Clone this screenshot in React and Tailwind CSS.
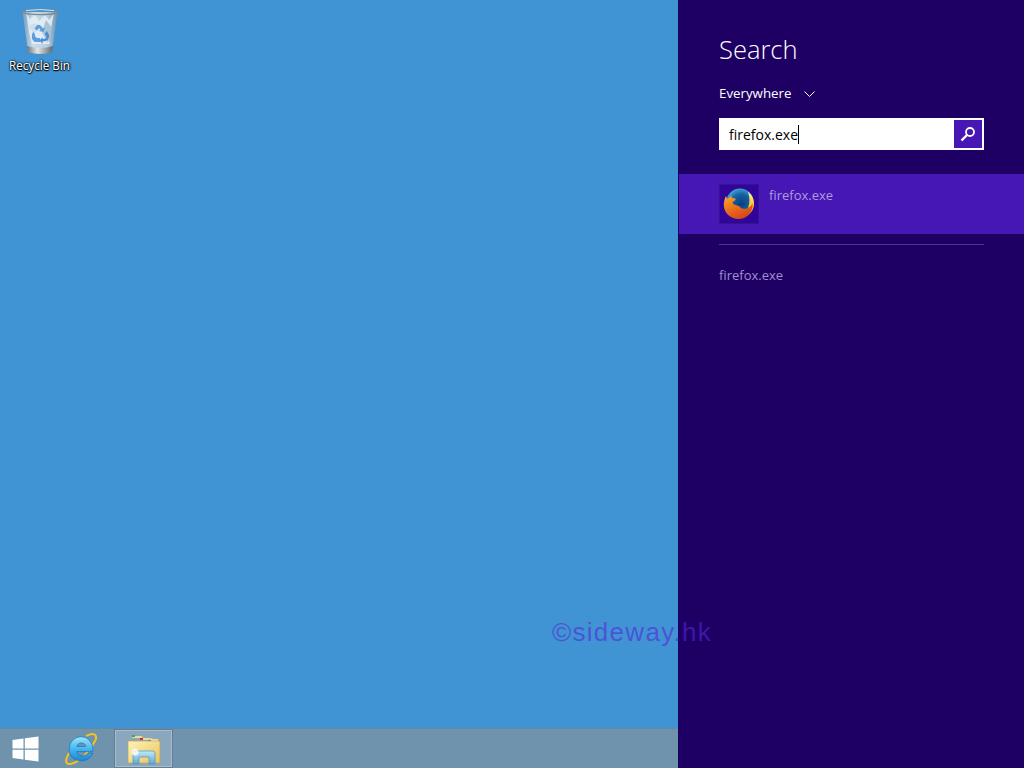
import React from 'react';

const uiFont = "font-['Open_Sans','Noto_Sans',sans-serif]";

function RecycleBinIcon() {
  return (
    <svg width="40" height="48" viewBox="0 0 40 48">
      <defs>
        <linearGradient id="binBody" x1="0" x2="1" y1="0" y2="0">
          <stop offset="0" stopColor="#6f9cbf" />
          <stop offset="0.3" stopColor="#c9dcea" />
          <stop offset="0.7" stopColor="#b7cfe0" />
          <stop offset="1" stopColor="#6590ae" />
        </linearGradient>
        <linearGradient id="binBase" x1="0" x2="1" y1="0" y2="0">
          <stop offset="0" stopColor="#6b7278" />
          <stop offset="0.4" stopColor="#e3e6e8" />
          <stop offset="1" stopColor="#5d6469" />
        </linearGradient>
      </defs>
      <path d="M2.5 4 L8 43 Q20 47 32 43 L37.5 4 Z" fill="url(#binBody)" />
      <path d="M6 4 L10 11 L15 7 L19 13 L25 7 L29 12 L34 5 L31 20 L28 29 L30 36 L12 36 L9 24 Z" fill="#e6eef4" opacity="0.85" />
      <path d="M26 12 L32 20 L28 35 L22 24 Z" fill="#a9c3d6" />
      <path d="M9 18 L15 15 L19 22 L13 25 Z" fill="#cfdeea" />
      <path d="M14 24 L15 27 Q14.5 29 17 30 L20 30 L20 34 L15 34 Q11 32 12 27 L12.5 25 Z" fill="#5b9edd" />
      <path d="M17 17 Q19 16 21 18 L23 20.5 L25 19.5 L23.5 24 L19 23 L20.5 22 L19 20 L17 22.5 L14.5 20.5 Z" fill="#5b9edd" />
      <path d="M27 23 L29 27 Q29.5 31 26 33 L22.5 33.5 L22.5 36 L19.5 32.5 L22.5 29 L22.5 31 L25.5 30.5 Q27 29.5 26 28 L24.5 26 Z" fill="#4a8fd3" />
      <path d="M6.8 38 L8 44 Q20 48 32 44 L33.2 38 Q20 42 6.8 38 Z" fill="url(#binBase)" />
      <ellipse cx="20" cy="4" rx="18" ry="2.6" fill="none" stroke="#7d8a94" strokeWidth="1.3" />
      <path d="M6 2.6 Q20 0.5 34 2.6" fill="none" stroke="#eef2f5" strokeWidth="0.8" />
    </svg>
  );
}

function WindowsLogo() {
  return (
    <svg width="27" height="26" viewBox="0 0 27 26">
      <path d="M0.5 4 L11.5 2.5 V12.4 H0.5 Z M12.8 2.3 L26.5 0.4 V12.4 H12.8 Z M0.5 13.7 H11.5 V23.6 L0.5 22 Z M12.8 13.7 H26.5 V25.6 L12.8 23.8 Z" fill="#fff" />
    </svg>
  );
}

function IeLogo() {
  return (
    <svg width="33" height="33" viewBox="0 0 32 32">
      <defs>
        <linearGradient id="ieFill" x1="0" x2="0" y1="0" y2="1">
          <stop offset="0" stopColor="#9ae6fb" />
          <stop offset="0.55" stopColor="#3fb2ee" />
          <stop offset="1" stopColor="#1a86d4" />
        </linearGradient>
      </defs>
      <path d="M4.5 21 C0 29 2 32.5 8 30.5 C17 27.5 26 17 30.5 8 C32.5 3 29 0 22 3.5" fill="none" stroke="#f2c01f" strokeWidth="2" strokeLinecap="round" />
      <path d="M5 16.5 A11.5 12 0 0 1 28 16.5 V19 H12.5 C13 24 21 24.5 23.5 20.5 H28 C24.5 31 5 31 5 16.5 Z M12.5 14 H21 C20.5 9.5 13 9.5 12.5 14 Z" fill="url(#ieFill)" fillRule="evenodd" stroke="#0f6db8" strokeWidth="0.6" />
    </svg>
  );
}

function ExplorerIcon() {
  return (
    <svg width="34" height="32" viewBox="0 0 34 32">
      <defs>
        <linearGradient id="folderFill" x1="0" x2="1" y1="0" y2="1">
          <stop offset="0" stopColor="#fff3b5" />
          <stop offset="1" stopColor="#e9c35f" />
        </linearGradient>
        <linearGradient id="standFill" x1="0" x2="0" y1="0" y2="1">
          <stop offset="0" stopColor="#c5e9f6" />
          <stop offset="1" stopColor="#5ba8d2" />
        </linearGradient>
      </defs>
      <path d="M5 3 H15 L16 5 H5 Z" fill="#f3eccd" stroke="#b9a265" strokeWidth="0.5" />
      <rect x="5" y="2" width="3" height="2" fill="#29b83f" />
      <path d="M14 5 H25 L26 7 H14 Z" fill="#f3eccd" stroke="#b9a265" strokeWidth="0.5" />
      <rect x="13" y="5" width="3" height="2" fill="#c8342d" />
      <path d="M22 6 H31 L32 9 H22 Z" fill="#f3eccd" stroke="#b9a265" strokeWidth="0.5" />
      <rect x="21" y="7" width="3" height="2" fill="#2d83d1" />
      <path d="M1 8 H32 Q33 8 33 9 V29 Q33 30 32 30 H2 Q1 30 1 29 Z" fill="url(#folderFill)" stroke="#bfa058" strokeWidth="0.7" />
      <path d="M6 31 V20 Q6 18 8 18 H26 Q28 18 28 20 V31 H22 V24 H12 V31 Z" fill="url(#standFill)" stroke="#4b94bd" strokeWidth="0.7" />
      <circle cx="8" cy="19" r="3.5" fill="#fff" opacity="0.75" />
    </svg>
  );
}

function FirefoxLogo() {
  return (
    <svg width="32" height="32" viewBox="0 0 32 32">
      <defs>
        <radialGradient id="foxGlobe" cx="0.55" cy="0.55" r="0.6">
          <stop offset="0" stopColor="#0b3f86" />
          <stop offset="0.55" stopColor="#14609f" />
          <stop offset="1" stopColor="#47aee0" />
        </radialGradient>
        <linearGradient id="foxBody" x1="0.2" x2="0.8" y1="0" y2="1">
          <stop offset="0" stopColor="#f7a02c" />
          <stop offset="0.55" stopColor="#e8641b" />
          <stop offset="1" stopColor="#cf3f1a" />
        </linearGradient>
        <linearGradient id="foxTail" x1="0" x2="0" y1="0" y2="1">
          <stop offset="0" stopColor="#fff6b0" />
          <stop offset="0.55" stopColor="#fdc32c" />
          <stop offset="1" stopColor="#ee851f" />
        </linearGradient>
      </defs>
      <circle cx="17" cy="14" r="13.5" fill="url(#foxGlobe)" />
      <path d="M25 3.5 C29.5 7 31.5 12 31 17 C30.5 22 27.5 26 23 28 L25 20 C27 15 27 9 25 3.5 Z" fill="url(#foxTail)" />
      <path d="M3 8 L4.5 11.5 C5.5 9.5 7.5 8.5 9 8 L8.5 10 L13 10.5 L11.5 13 L9.5 14 C9.5 15.5 10.5 16.5 12.5 17 C14.5 17.5 16.5 18 18 20 C20.5 21.5 24.5 21 27 18.5 C28 18 29 16.5 29.5 15 C30.5 23.5 24.5 31 15.5 31 C7 31 0.8 24.5 0.8 17 C0.8 13.5 1.5 10.5 3 8 Z" fill="url(#foxBody)" />
      <path d="M14 16 C17 14.5 20 14.5 22 16 C20.5 18 17 18 14 16 Z" fill="#0b3f86" />
    </svg>
  );
}

export default function App() {
  return (
    <div className={`relative flex h-screen w-full overflow-hidden bg-[#4194d3] ${uiFont}`}>
      <div className="flex min-w-0 flex-1 flex-col">
        <div className="flex-1 pt-[8px]">
          <div className="flex w-[79px] flex-col items-center">
            <RecycleBinIcon />
            <span className="mt-[2px] text-[11.7px] leading-[14px] text-white [text-shadow:0_1px_1px_#000,0_0_2px_#000,1px_0_2px_#000]">
              Recycle Bin
            </span>
          </div>
        </div>
        <div className="flex h-10 items-center border-t border-[#66899f] bg-[#6f93ad]">
          <div className="ml-[12px] flex h-full w-[42px] items-center">
            <WindowsLogo />
          </div>
          <div className="ml-[10px] flex h-full w-[50px] items-center">
            <IeLogo />
          </div>
          <div className="flex h-[39px] w-[59px] items-center justify-center border border-[#5f7f96] bg-[#8ba7bd] shadow-[inset_0_0_0_1px_#a9bccb]">
            <ExplorerIcon />
          </div>
        </div>
      </div>

      <div className="flex w-[346px] shrink-0 flex-col bg-[#1e0064]">
        <h1 className="mt-[30px] ml-[41px] text-[25.5px] leading-[38px] font-light text-white">Search</h1>
        <div className="mt-[16px] ml-[41px] flex h-[20px] items-center gap-[13px] text-[13.3px] text-white">
          <span>Everywhere</span>
          <svg width="11" height="7" viewBox="0 0 11 7" fill="none" stroke="#fff" strokeWidth="1">
            <path d="M0.5 0.5 L5.5 5.5 L10.5 0.5" />
          </svg>
        </div>
        <div className="mt-[14px] ml-[41px] flex h-8 w-[265px] items-stretch border-2 border-white bg-white">
          <div className="flex flex-1 items-center pl-[8px] text-[14px] text-black">
            <span>firefox.exe</span>
            <span className="h-[19px] w-px bg-black" />
          </div>
          <div className="flex w-[28px] items-center justify-center bg-[#4617b4]">
            <svg width="16" height="16" viewBox="0 0 16 16" fill="none" stroke="#fff">
              <circle cx="10" cy="6" r="4" strokeWidth="1.8" />
              <path d="M7 9 L1.5 14.5" strokeWidth="2.4" />
            </svg>
          </div>
        </div>

        <div className="mt-6 ml-px flex h-[60px] items-start bg-[#4617b4] pt-[10px] pl-[40px]">
          <div className="flex h-10 w-10 items-center justify-center border border-[#35148f] bg-[#30069a]">
            <FirefoxLogo />
          </div>
          <span className="ml-[10px] text-[13px] leading-[22px] text-[#ad9be0]">firefox.exe</span>
        </div>
        <div className="mt-[10px] ml-[41px] h-px w-[265px] bg-[#4d3587]" />
        <div className="mt-[20px] ml-[41px] text-[13px] leading-[20px] text-[#a08fd0]">firefox.exe</div>
      </div>

      <div className="pointer-events-none absolute top-[615px] left-[552px] font-['Liberation_Sans',sans-serif] text-[26px] leading-[34px] tracking-[1.3px] text-[#5326dc]/60">
        ©sideway.hk
      </div>
    </div>
  );
}
